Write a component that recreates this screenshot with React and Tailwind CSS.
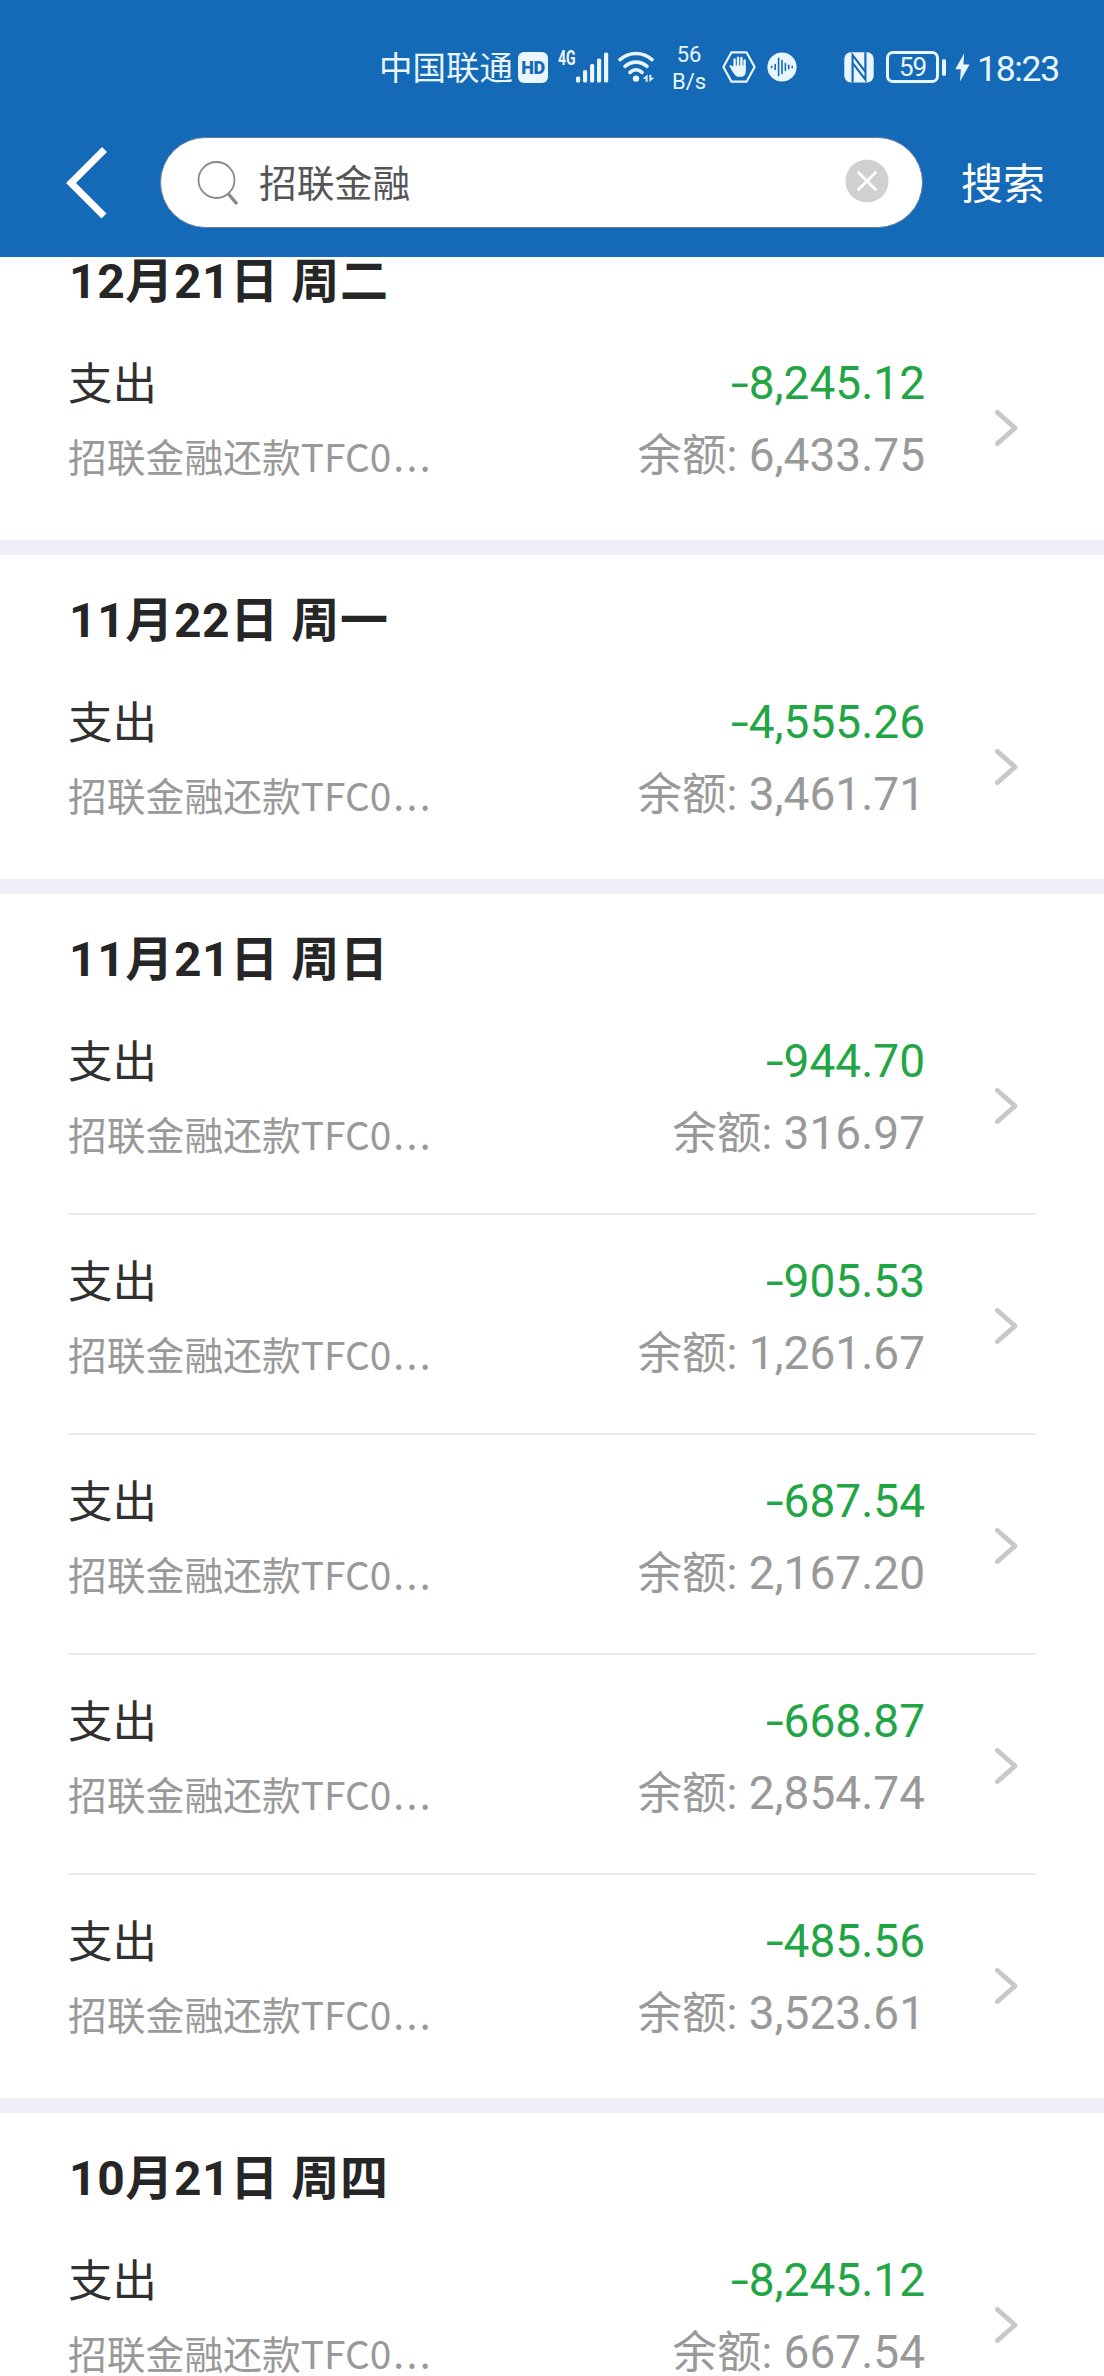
import React, { useState } from 'react';

const groups = [
    {
        date: '12月21日 周二',
        items: [{ amount: '-8,245.12', balance: '6,433.75' }],
    },
    {
        date: '11月22日 周一',
        items: [{ amount: '-4,555.26', balance: '3,461.71' }],
    },
    {
        date: '11月21日 周日',
        items: [
            { amount: '-944.70', balance: '316.97' },
            { amount: '-905.53', balance: '1,261.67' },
            { amount: '-687.54', balance: '2,167.20' },
            { amount: '-668.87', balance: '2,854.74' },
            { amount: '-485.56', balance: '3,523.61' },
        ],
    },
    {
        date: '10月21日 周四',
        items: [{ amount: '-8,245.12', balance: '667.54' }],
    },
];

const SignalIcon = () => (
    <svg width="33" height="31" viewBox="0 0 33 31" fill="currentColor">
        <rect x="0" y="24.5" width="4.2" height="6" rx="1.6" />
        <rect x="7" y="18" width="4.2" height="12.5" rx="1.6" />
        <rect x="14" y="12" width="4.2" height="18.5" rx="1.6" />
        <rect x="21" y="6.5" width="4.2" height="24" rx="1.6" />
        <rect x="28" y="0.5" width="4.2" height="30" rx="1.6" />
    </svg>
);

const WifiIcon = () => (
    <svg width="37" height="32" viewBox="0 0 37 32" fill="none" stroke="currentColor" strokeWidth="3.6" strokeLinecap="round">
        <path d="M2 8.6C11 0.4 25 0.4 34 8.6" />
        <path d="M7 15.4C13.2 9.7 22.8 9.7 29 15.4" />
        <path d="M12 21.4C15.6 18 20.4 18 24 21.4" />
        <circle cx="18" cy="27.6" r="3.2" fill="currentColor" stroke="none" />
        <path d="M29.6 23.5v7.2h-1.9v-3h-3zM31.4 31v-7.2h1.9v3h3z" fill="currentColor" stroke="none" />
    </svg>
);

const HandIcon = () => (
    <svg width="34" height="32" viewBox="0 0 34 32" fill="none">
        <path d="M9.5 1.3h15L32.6 16l-8.1 14.7h-15L1.4 16z" stroke="currentColor" strokeWidth="2.2" strokeLinejoin="round" />
        <g stroke="currentColor" strokeWidth="2.4" strokeLinecap="round">
            <path d="M12.6 8.4v9M16 6.8v9M19.4 7v9M22.6 9.4v8M8.6 15.2l3.4 4" />
        </g>
        <path d="M11.4 14.5h12.4v5.7c0 3.6-2 5.6-5 5.6h-1.6c-2.4 0-3.7-1-5-2.9L8.8 18z" fill="currentColor" />
    </svg>
);

const VoiceIcon = () => (
    <svg width="30" height="30" viewBox="0 0 30 30">
        <circle cx="15" cy="15" r="14.6" fill="currentColor" />
        <path
            d="M4.6 14.4v1.2M8.2 12.6v4.8M11.6 6.4v17.2M15 8.6v12.8M18.4 11.6v6.8M21.8 13.2v3.6M25.2 14.4v1.2"
            stroke="#146ab7"
            strokeWidth="1.6"
            strokeLinecap="round"
        />
    </svg>
);

const NfcIcon = () => (
    <svg width="30" height="31" viewBox="0 0 30 31">
        <rect x="0.3" y="0.3" width="29.4" height="30.2" rx="6.5" fill="currentColor" />
        <path d="M8.6 30.5V3.2L21.4 20" fill="none" stroke="#146ab7" strokeWidth="2.2" />
        <path d="M21.4 0.3v27.2L8.6 10.8" fill="none" stroke="#146ab7" strokeWidth="2.2" />
        <path d="M9.8 6.8l10.4 13.4v3.8L9.8 10.4z" fill="currentColor" />
    </svg>
);

const BoltIcon = () => (
    <svg width="15" height="29" viewBox="0 0 15 29" fill="currentColor">
        <path d="M9.2 0.2L0.3 16.2h5.5L5 28.6 14.6 11.4H8.4z" />
    </svg>
);

const StatusBar = () => (
    <div className="flex h-[120px] items-start pl-[379px] pt-[44px] text-[#e9f5ff]">
        <div className="w-[139px] whitespace-nowrap text-[33.5px] leading-[44px]">中国联通</div>
        <div className="mt-[8px] flex h-[31px] w-[30px] items-center justify-center rounded-[6px] bg-current">
            <span className="font-[Roboto] text-[18px] font-black leading-none tracking-[-0.5px] text-[#146ab7]">HD</span>
        </div>
        <div className="ml-[10px] mt-[6px] w-[18px] font-[Roboto] text-[20px] font-bold leading-[17px]">
            <span className="inline-block origin-left scale-x-[0.7]">4G</span>
        </div>
        <div className="mt-[8px]"><SignalIcon /></div>
        <div className="ml-[9px] mt-[7px]"><WifiIcon /></div>
        <div className="ml-[16px] w-[36px] text-center font-[Roboto] text-[22px] leading-[27px] -mt-[3px]">
            <div>56</div>
            <div>B/s</div>
        </div>
        <div className="ml-[15px] mt-[7px]"><HandIcon /></div>
        <div className="ml-[11px] mt-[8px]"><VoiceIcon /></div>
        <div className="ml-[47px] mt-[8px]"><NfcIcon /></div>
        <div className="ml-[12px] mt-[7px] flex h-[32px] w-[53px] items-center justify-center rounded-[7px] border-[3px] border-current font-[Roboto] text-[26px] leading-none tracking-[-1px]">
            59
        </div>
        <div className="ml-[3px] mt-[15px] h-[17px] w-[4px] rounded-[2px] bg-current" />
        <div className="ml-[9px] mt-[9px]"><BoltIcon /></div>
        <div className="ml-[7px] mt-[4px] font-[Roboto] text-[35.5px] leading-[42px] tracking-[-1.3px]">18:23</div>
    </div>
);

const SearchHeader = () => {
    const [keyword, setKeyword] = useState('招联金融');

    return (
        <div className="flex h-[137px] items-start">
            <button type="button" className="ml-[65px] mt-[26px]">
                <svg width="44" height="73" viewBox="0 0 44 73" fill="none" stroke="#fff" strokeWidth="7">
                    <path d="M39.5 3.5L6 37l33 33" />
                </svg>
            </button>
            <div className="ml-[51px] mt-[17px] flex h-[91px] w-[763px] items-center rounded-full border-[1.5px] border-[#5f7f9f] bg-white pl-[36px] pr-[33px]">
                <svg width="44" height="44" viewBox="0 0 44 44" fill="none" stroke="#888">
                    <circle cx="19.5" cy="19" r="18" strokeWidth="1.8" />
                    <path d="M31.5 33l8.5 10" strokeWidth="3.4" />
                </svg>
                <input
                    value={keyword}
                    onChange={(e) => setKeyword(e.target.value)}
                    className="mb-[3px] ml-[18px] h-[56px] flex-1 bg-transparent text-[37.8px] leading-[56px] text-[#555] outline-none"
                />
                <button type="button" onClick={() => setKeyword('')} className="mb-[3px]">
                    <svg width="44" height="44" viewBox="0 0 44 44">
                        <circle cx="22" cy="22" r="21.5" fill="#d0d0d0" />
                        <path d="M13.5 13.5l17 17M30.5 13.5l-17 17" stroke="#fff" strokeWidth="2.8" strokeLinecap="round" />
                    </svg>
                </button>
            </div>
            <button type="button" className="ml-[38px] mt-[33px] whitespace-nowrap text-[42px] leading-[56px] text-white">搜索</button>
        </div>
    );
};

const Row = ({ item }) => (
    <div className="mx-[68px] flex h-[220px] items-start border-b-2 border-[#ebebeb] last:border-transparent">
        <div className="flex-1 pt-[34px]">
            <div className="text-[44.5px] leading-[60px] text-[#303030]">支出</div>
            <div className="mt-[14px] text-[38.8px] leading-[60px] text-[#999]">
                招联金融还款TFC0<span className="ml-[2px] tracking-[2.4px]">...</span>
            </div>
        </div>
        <div className="pt-[36px] text-right font-[Roboto,'Noto_Sans_CJK_SC'] text-[46px] leading-[60px]">
            <div className="text-[#22a544]">
                <span className="inline-block origin-right scale-x-[1.4]">-</span>
                {item.amount.slice(1)}
            </div>
            <div className="mt-[12px] text-[#999]">
                <span className="text-[44.5px]">余额:</span> {item.balance}
            </div>
        </div>
        <svg className="ml-[69px] mr-[17px] mt-[92px]" width="25" height="38" viewBox="0 0 25 38" fill="none" stroke="#c8c8c8" strokeWidth="5" strokeLinecap="round" strokeLinejoin="round">
            <path d="M3.5 3.5L21 19 3.5 34.5" />
        </svg>
    </div>
);

const Group = ({ group }) => (
    <section className="shrink-0 border-b-[15px] border-[#eeeff6] bg-white pb-[3px]">
        <h2 className="h-[101px] pl-[69px] pt-[36px] font-[Roboto,'Noto_Sans_CJK_SC'] text-[48px] font-bold leading-[60px] tracking-[0.6px] text-[#262626]">
            {group.date}
        </h2>
        <div>
            {group.items.map((item) => (
                <Row key={item.amount} item={item} />
            ))}
        </div>
    </section>
);

export default function App() {
    return (
        <div className="flex h-[2376px] w-[1104px] flex-col overflow-hidden bg-white font-['Noto_Sans_CJK_SC',sans-serif]">
            <header className="shrink-0 bg-[#146ab7]">
                <StatusBar />
                <SearchHeader />
            </header>
            <main className="flex-1 overflow-hidden">
                <div className="-mt-[41px] flex flex-col">
                    {groups.map((group) => (
                        <Group key={group.date} group={group} />
                    ))}
                </div>
            </main>
        </div>
    );
}
